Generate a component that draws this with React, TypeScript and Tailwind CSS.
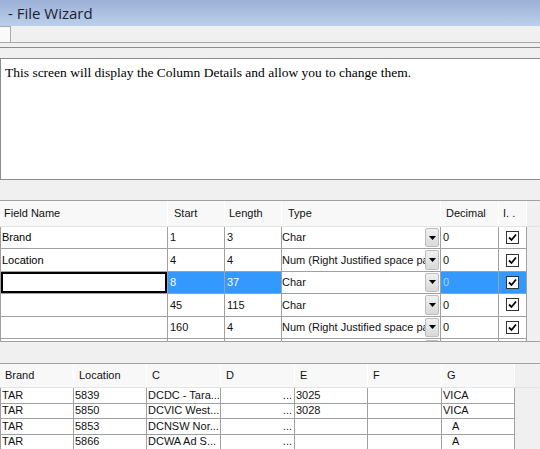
import React from 'react';

const UI_FONT = { fontFamily: '"Liberation Sans", Arial, sans-serif' };

type TopRow = {
  name: string;
  start: string;
  length: string;
  type: string;
  decimal: string;
  selected?: boolean;
  blank?: boolean;
};

const topRows: TopRow[] = [
  { name: 'Brand', start: '1', length: '3', type: 'Char', decimal: '0' },
  { name: 'Location', start: '4', length: '4', type: 'Num (Right Justified space pad)', decimal: '0' },
  { name: '', start: '8', length: '37', type: 'Char', decimal: '0', selected: true },
  { name: '', start: '45', length: '115', type: 'Char', decimal: '0' },
  { name: '', start: '160', length: '4', type: 'Num (Right Justified space pad)', decimal: '0' },
  // next row is only peeking out under the bottom edge
  { name: '', start: '', length: '', type: '', decimal: '', blank: true },
];

const bottomCols = ['Brand', 'Location', 'C', 'D', 'E', 'F', 'G'];
const bottomWidths = ['w-[74px]', 'w-[73px]', 'w-[74px]', 'w-[74px]', 'w-[73px]', 'w-[74px]', 'w-[73px]'];

const bottomRows = [
  ['TAR', '5839', 'DCDC - Tara...', '...', '3025', '', 'VICA'],
  ['TAR', '5850', 'DCVIC West...', '...', '3028', '', 'VICA'],
  ['TAR', '5853', 'DCNSW Nor...', '...', '', '', 'A'],
  ['TAR', '5866', 'DCWA Ad S...', '...', '', '', 'A'],
];

const Checkbox: React.FC = () => (
  <div className="w-[13px] h-[13px] bg-white border border-[#333] flex items-center justify-center">
    <svg width="9" height="9" viewBox="0 0 9 9">
      <path d="M1 4.5 L3.5 7 L8 1.5" fill="none" stroke="#000" strokeWidth="1.8" />
    </svg>
  </div>
);

const DropButton: React.FC = () => (
  <div className="absolute right-[1px] top-[1px] bottom-[1px] w-[14px] bg-gradient-to-b from-[#f0f0f0] to-[#d9d9d9] border border-[#bdbdbd] rounded-[2px] flex items-center justify-center">
    <svg width="7" height="4" viewBox="0 0 7 4">
      <path d="M0 0 H7 L3.5 4 Z" fill="#000" />
    </svg>
  </div>
);

const TopGrid: React.FC = () => (
  <div className="h-[142px] border-t border-b border-[#a0a0a0] overflow-hidden bg-[#f0f0f0]">
    <div className="flex h-[26px] border-b border-[#e4e4e4]">
      {[
        ['Field Name', 'w-[168px] pl-[4px]'],
        ['Start', 'w-[57px] pl-[6px]'],
        ['Length', 'w-[57px] pl-[4px]'],
        ['Type', 'w-[159px] pl-[6px]'],
        ['Decimal', 'w-[58px] pl-[5px]'],
        ['I. .', 'w-[28px] pl-[4px]'],
      ].map(([label, cls]) => (
        <div key={label} className={`${cls} bg-[#f8f8f8] border-r border-white flex items-center text-[11px] text-[#111]`}>
          {label}
        </div>
      ))}
    </div>
    {topRows.map((r, i) => {
      const sel = r.selected;
      const cellBase = 'border-r border-b border-[#a0a0a0] flex items-center text-[11px] h-full';
      const selCls = sel ? 'bg-[#3399ff] text-white' : 'bg-white text-[#111]';
      return (
        <div key={i} className="flex h-[22.4px]">
          <div className={`w-[168px] ${cellBase} bg-white border-l border-l-[#a0a0a0] relative`}>
            {sel ? (
              <div className="absolute left-0 top-0 right-0 bottom-0 border-2 border-black" />
            ) : (
              <span className="pl-[1px]">{r.name}</span>
            )}
          </div>
          <div className={`w-[57px] ${cellBase} ${selCls} pl-[2px]`}>{r.start}</div>
          <div className={`w-[57px] ${cellBase} ${selCls} pl-[2px]`}>{r.length}</div>
          <div className={`w-[159px] ${cellBase} bg-white text-[#111] relative overflow-hidden`}>
            <span className="whitespace-nowrap pr-[16px] overflow-hidden">{r.type}</span>
            <DropButton />
          </div>
          <div className={`w-[58px] ${cellBase} ${sel ? 'bg-[#3399ff] text-[#a8d4ff]' : 'bg-white text-[#111]'} pl-[2px]`}>
            {r.decimal}
          </div>
          <div className={`w-[28px] ${cellBase} ${sel ? 'bg-[#3399ff]' : 'bg-white'} justify-center`}>
            {!r.blank && <Checkbox />}
          </div>
        </div>
      );
    })}
  </div>
);

const BottomGrid: React.FC = () => (
  <div className="flex-1 border-t border-[#a0a0a0] overflow-hidden bg-[#f0f0f0]">
    <div className="flex h-[24px] border-b border-[#e4e4e4]">
      {bottomCols.map((c, i) => (
        <div key={c} className={`${bottomWidths[i]} bg-[#f8f8f8] border-r border-white flex items-center pl-[5px] text-[11px] text-[#111]`}>
          {c}
        </div>
      ))}
    </div>
    {bottomRows.map((row, ri) => (
      <div key={ri} className="flex h-[15.5px]">
        {row.map((v, ci) => (
          <div
            key={ci}
            className={`${bottomWidths[ci]} ${ci === 0 ? 'border-l border-l-[#a0a0a0]' : ''} h-full bg-white border-r border-b border-[#a0a0a0] flex items-center text-[11px] text-[#111] leading-none overflow-hidden whitespace-nowrap ${
              ci === 3 ? 'justify-end pr-[2px]' : ci === 6 && v === 'A' ? 'pl-[10px]' : 'pl-[1px]'
            }`}
          >
            {v}
          </div>
        ))}
      </div>
    ))}
  </div>
);

export default function App() {
  return (
    <div className="w-[540px] h-[449px] overflow-hidden bg-[#f0f0f0] flex flex-col" style={UI_FONT}>
      <div className="h-[26px] shrink-0 bg-gradient-to-b from-[#9cb0d6] to-[#bcd0ec] flex items-center pl-[8px] pt-[1px]">
        <span className="text-[15px] text-[#1b2331]" style={{ fontFamily: '"Open Sans", "Noto Sans", sans-serif' }}>
          - File Wizard
        </span>
      </div>
      <div className="h-[17px] shrink-0 border-b border-[#a8a8a8] flex items-end">
        <div className="w-[11px] h-[16px] bg-[#fafafa] border-t border-r border-[#a8a8a8]" />
      </div>
      <div className="h-[4px] shrink-0" />
      <div className="h-[11px] shrink-0 border-t border-[#8c8c8c]" />
      <div className="h-[122px] shrink-0 bg-white border-t border-l border-b border-[#8c8c8c] px-[4px] pt-[5px]">
        <p className="text-[13.5px] leading-[18px] text-black" style={{ fontFamily: '"Liberation Serif", "Times New Roman", serif' }}>
          This screen will display the Column Details and allow you to change them.
        </p>
      </div>
      <div className="h-[20px] shrink-0" />
      <TopGrid />
      <div className="h-[21px] shrink-0" />
      <BottomGrid />
    </div>
  );
}
